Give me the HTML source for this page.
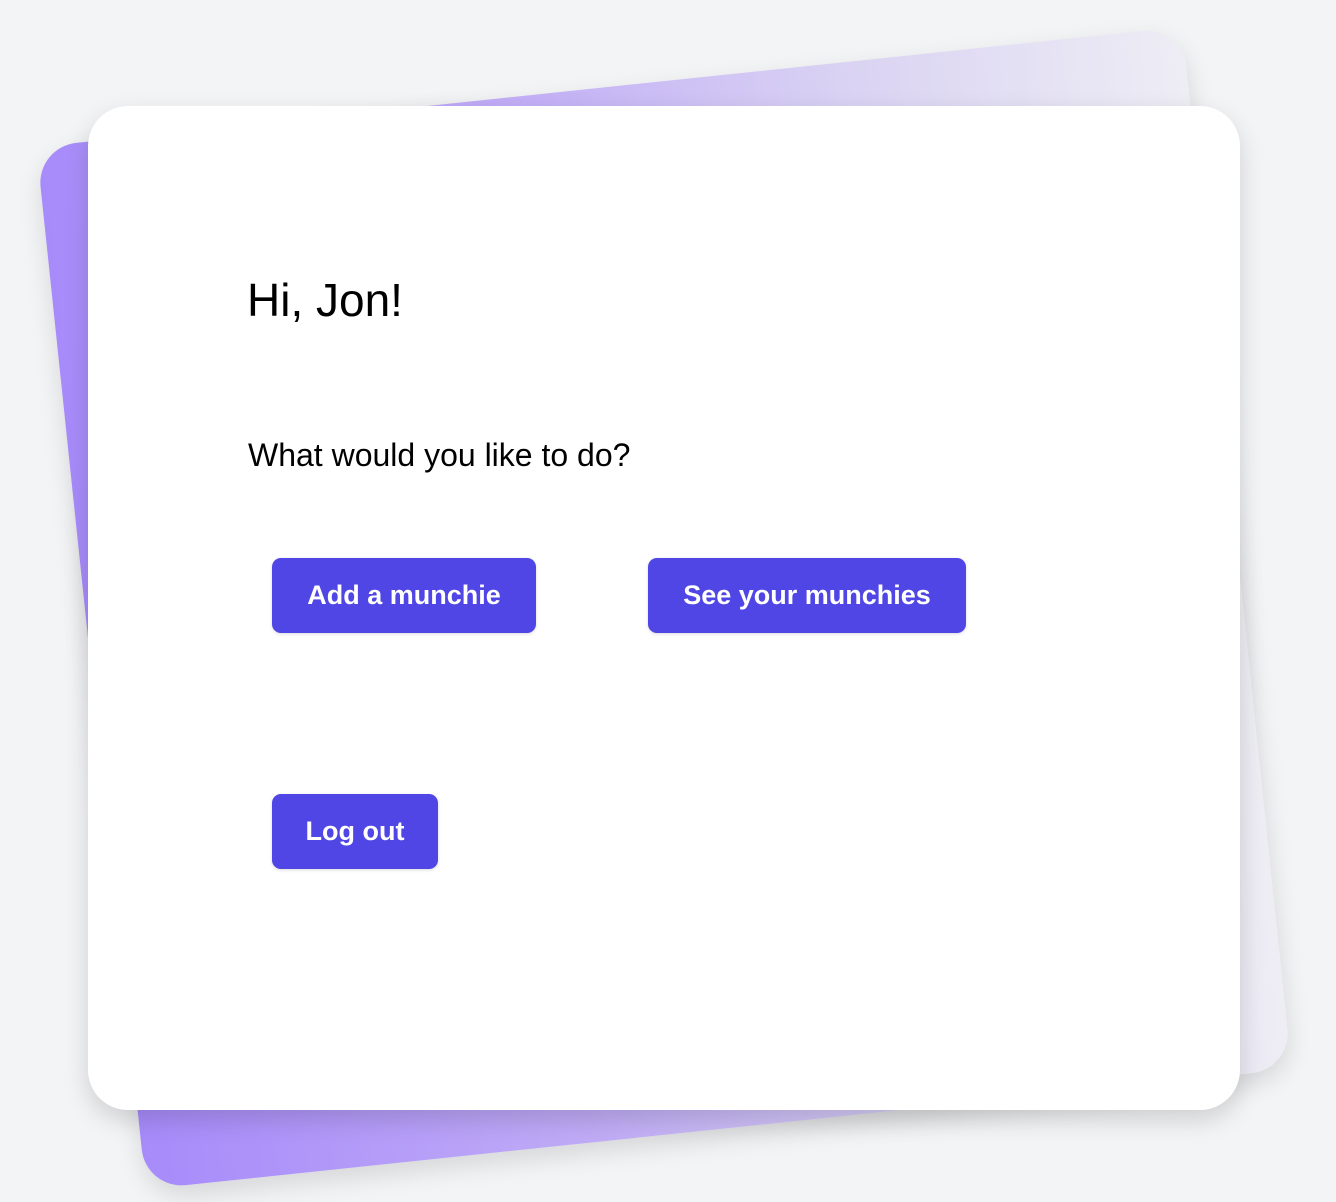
<!DOCTYPE html>
<html><head><style>
html,body{margin:0;padding:0;}
body{width:1336px;height:1202px;background:#f3f4f6;position:relative;overflow:hidden;font-family:"Liberation Sans",sans-serif;}
.back{position:absolute;left:88px;top:84px;width:1152px;height:1048px;border-radius:40px;transform:rotate(-6deg);background:linear-gradient(to right,#a78bfa 0%,#c0acf6 40%,#d9d2f3 70%,#eeedf4 100%);box-shadow:0 10px 25px rgba(0,0,0,0.12);}
.front{position:absolute;left:88px;top:106px;width:1152px;height:1004px;border-radius:40px;background:#fff;box-shadow:0 10px 25px rgba(0,0,0,0.15);}
h1{position:absolute;left:247px;top:272px;margin:0;font-size:46px;font-weight:normal;color:#000;line-height:56px;}
p{position:absolute;left:248px;top:436px;margin:0;font-size:32px;color:#000;line-height:38px;}
.btn{position:absolute;background:#4f46e5;color:#fff;border-radius:9px;font-size:27px;font-weight:bold;display:flex;align-items:center;justify-content:center;box-shadow:0 1px 3px rgba(0,0,0,0.15);}
</style></head><body>
<div class="back"></div>
<div class="front"></div>
<h1>Hi, Jon!</h1>
<p>What would you like to do?</p>
<div class="btn" style="left:272px;top:558px;width:264px;height:75px;">Add a munchie</div>
<div class="btn" style="left:648px;top:558px;width:318px;height:75px;">See your munchies</div>
<div class="btn" style="left:272px;top:794px;width:166px;height:75px;">Log out</div>
</body></html>
